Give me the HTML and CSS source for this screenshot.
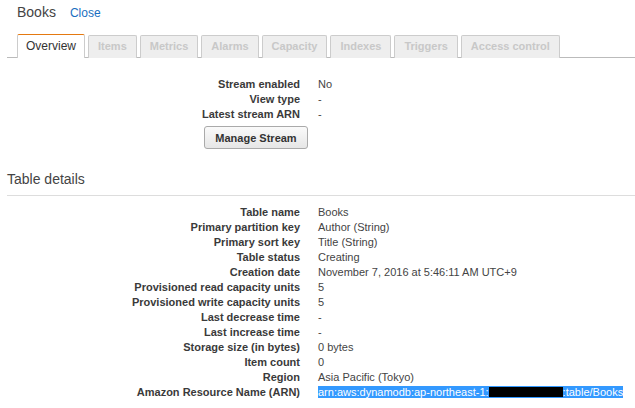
FILE: index.html
```html
<!DOCTYPE html>
<html>
<head>
<meta charset="utf-8">
<link rel="stylesheet" href="styles.css">
</head>
<body>
<div class="header">
  <span class="title">Books</span>
  <a class="close" href="#">Close</a>
</div>
<ul class="tabs">
  <li class="tab active">Overview</li>
  <li class="tab">Items</li>
  <li class="tab">Metrics</li>
  <li class="tab">Alarms</li>
  <li class="tab">Capacity</li>
  <li class="tab">Indexes</li>
  <li class="tab">Triggers</li>
  <li class="tab">Access control</li>
</ul>
<div class="props stream">
  <div class="label">Stream enabled</div><div class="value">No</div>
  <div class="label">View type</div><div class="value">-</div>
  <div class="label">Latest stream ARN</div><div class="value">-</div>
</div>
<div class="actions">
  <button class="btn">Manage Stream</button>
</div>
<h2 class="section-title">Table details</h2>
<div class="props details">
  <div class="label">Table name</div><div class="value">Books</div>
  <div class="label">Primary partition key</div><div class="value">Author (String)</div>
  <div class="label">Primary sort key</div><div class="value">Title (String)</div>
  <div class="label">Table status</div><div class="value">Creating</div>
  <div class="label">Creation date</div><div class="value">November 7, 2016 at 5:46:11 AM UTC+9</div>
  <div class="label">Provisioned read capacity units</div><div class="value">5</div>
  <div class="label">Provisioned write capacity units</div><div class="value">5</div>
  <div class="label">Last decrease time</div><div class="value">-</div>
  <div class="label">Last increase time</div><div class="value">-</div>
  <div class="label">Storage size (in bytes)</div><div class="value">0 bytes</div>
  <div class="label">Item count</div><div class="value">0</div>
  <div class="label">Region</div><div class="value">Asia Pacific (Tokyo)</div>
  <div class="label">Amazon Resource Name (ARN)</div><div class="value"><span class="selected">arn:aws:dynamodb:ap-northeast-1:<span class="redact"></span>:table/Books</span></div>
</div>
</body>
</html>
```
FILE: styles.css
```css
* { box-sizing: border-box; }
html, body { margin: 0; padding: 0; background: #fff; }
body {
  font-family: "Liberation Sans", Arial, sans-serif;
  font-size: 11px;
  color: #444;
  width: 635px;
  height: 408px;
  overflow: hidden;
}
.header {
  display: flex;
  align-items: baseline;
  padding: 3px 0 0 17px;
  height: 34px;
}
.title {
  font-size: 14px;
  line-height: 18px;
  color: #444;
}
.close {
  font-size: 12px;
  color: #1a6fc0;
  text-decoration: none;
  margin-left: 14px;
}
.tabs {
  list-style: none;
  margin: 0 0 0 7px;
  padding: 0 0 0 10px;
  display: flex;
  gap: 3px;
  border-bottom: 1px solid #bbb;
  height: 24px;
}
.tab {
  height: 23px;
  margin-top: 1px;
  padding: 0 9px;
  line-height: 21px;
  font-weight: bold;
  color: #c8c8c8;
  background: #eee;
  border: 1px solid #ccc;
  border-bottom: none;
  border-radius: 2px 2px 0 0;
}
.tab.active {
  height: 24px;
  margin-top: 0;
  padding: 0 8px;
  background: #fff;
  color: #333;
  font-weight: normal;
  font-size: 12px;
  border-top: 1px solid #e47911;
  line-height: 22px;
}
.props {
  display: grid;
  grid-template-columns: 300px 1fr;
  column-gap: 18px;
  line-height: 15px;
}
.stream { margin-top: 19px; }
.label {
  text-align: right;
  font-weight: bold;
  color: #3a3a3a;
  white-space: nowrap;
}
.value { color: #444; white-space: nowrap; }
.actions {
  padding: 4px 0 0 204px;
}
.btn {
  font-family: "Liberation Sans", Arial, sans-serif;
  font-size: 11px;
  font-weight: bold;
  color: #333;
  width: 104px;
  height: 23px;
  border: 1px solid #aaa;
  border-radius: 3px;
  background: linear-gradient(#fafafa, #e6e6e6);
  padding: 0;
}
.section-title {
  margin: 22px 0 0 7px;
  padding: 0 0 8px 0;
  font-size: 14px;
  font-weight: normal;
  line-height: 16px;
  color: #444;
  border-bottom: 1px solid #ddd;
}
.details { margin-top: 9px; }
.selected {
  background: #3399ff;
  color: #fff;
}
.redact {
  display: inline-block;
  width: 74px;
  height: 10px;
  background: #000;
  vertical-align: -1px;
}
```
